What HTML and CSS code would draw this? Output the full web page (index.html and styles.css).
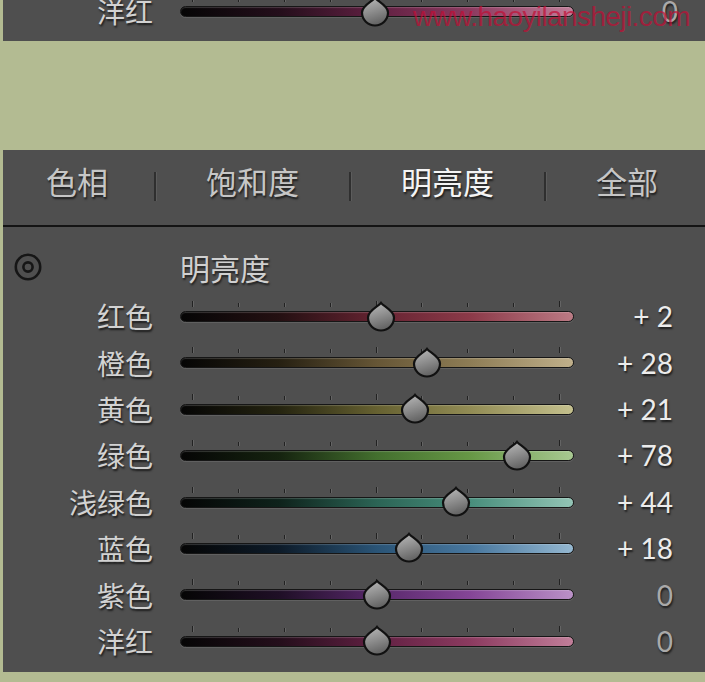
FILE: index.html
```html
<!DOCTYPE html>
<html lang="zh-CN">
<head>
<meta charset="utf-8">
<title>HSL 明亮度</title>
<link rel="stylesheet" href="styles.css">
</head>
<body>
<svg class="defs" width="0" height="0" aria-hidden="true">
  <defs>
    <linearGradient id="thumbFill" x1="0" y1="0" x2="0.3" y2="1">
      <stop offset="0" stop-color="#bdbdbd"/>
      <stop offset="0.55" stop-color="#8e8e8e"/>
      <stop offset="1" stop-color="#666666"/>
    </linearGradient>
  </defs>
</svg>

<div class="panel panel-top">
  <div class="row row-cut">
    <div class="label">洋红</div>
    <div class="slider">
      <div class="ticks"><i class="tall"></i><i></i><i></i><i></i><i class="tall"></i><i></i><i></i><i></i><i class="tall"></i></div>
      <div class="track t-magenta"></div>
      <svg class="thumb" style="left:181px" viewBox="0 0 28 28"><path d="M14 0.8 C16.8 4.5 27 8.5 27 15.5 A13 13 0 0 1 1 15.5 C1 8.5 11.2 4.5 14 0.8 Z"/></svg>
    </div>
    <div class="value zero shift">0</div>
  </div>
  <div class="watermark">www.haoyilansheji.com</div>
</div>

<div class="panel panel-main">
  <div class="tabs">
    <div class="tab tab-1">色相</div>
    <span class="sep"></span>
    <div class="tab tab-mid">饱和度</div>
    <span class="sep"></span>
    <div class="tab tab-mid active">明亮度</div>
    <span class="sep"></span>
    <div class="tab tab-last">全部</div>
  </div>

  <div class="section-head">
    <div class="target">
      <svg viewBox="0 0 28 28" width="28" height="28"><circle cx="14" cy="14" r="12.2"/><circle cx="14" cy="14" r="4.6"/></svg>
    </div>
    <div class="section-title">明亮度</div>
  </div>

  <div class="row">
    <div class="label">红色</div>
    <div class="slider">
      <div class="ticks"><i class="tall"></i><i></i><i></i><i></i><i class="tall"></i><i></i><i></i><i></i><i class="tall"></i></div>
      <div class="track t-red"></div>
      <svg class="thumb" style="left:186.6px" viewBox="0 0 28 28"><path d="M14 0.8 C16.8 4.5 27 8.5 27 15.5 A13 13 0 0 1 1 15.5 C1 8.5 11.2 4.5 14 0.8 Z"/></svg>
    </div>
    <div class="value">+ 2</div>
  </div>

  <div class="row">
    <div class="label">橙色</div>
    <div class="slider">
      <div class="ticks"><i class="tall"></i><i></i><i></i><i></i><i class="tall"></i><i></i><i></i><i></i><i class="tall"></i></div>
      <div class="track t-orange"></div>
      <svg class="thumb" style="left:233.4px" viewBox="0 0 28 28"><path d="M14 0.8 C16.8 4.5 27 8.5 27 15.5 A13 13 0 0 1 1 15.5 C1 8.5 11.2 4.5 14 0.8 Z"/></svg>
    </div>
    <div class="value">+ 28</div>
  </div>

  <div class="row">
    <div class="label">黄色</div>
    <div class="slider">
      <div class="ticks"><i class="tall"></i><i></i><i></i><i></i><i class="tall"></i><i></i><i></i><i></i><i class="tall"></i></div>
      <div class="track t-yellow"></div>
      <svg class="thumb" style="left:220.8px" viewBox="0 0 28 28"><path d="M14 0.8 C16.8 4.5 27 8.5 27 15.5 A13 13 0 0 1 1 15.5 C1 8.5 11.2 4.5 14 0.8 Z"/></svg>
    </div>
    <div class="value">+ 21</div>
  </div>

  <div class="row">
    <div class="label">绿色</div>
    <div class="slider">
      <div class="ticks"><i class="tall"></i><i></i><i></i><i></i><i class="tall"></i><i></i><i></i><i></i><i class="tall"></i></div>
      <div class="track t-green"></div>
      <svg class="thumb" style="left:323.4px" viewBox="0 0 28 28"><path d="M14 0.8 C16.8 4.5 27 8.5 27 15.5 A13 13 0 0 1 1 15.5 C1 8.5 11.2 4.5 14 0.8 Z"/></svg>
    </div>
    <div class="value">+ 78</div>
  </div>

  <div class="row">
    <div class="label">浅绿色</div>
    <div class="slider">
      <div class="ticks"><i class="tall"></i><i></i><i></i><i></i><i class="tall"></i><i></i><i></i><i></i><i class="tall"></i></div>
      <div class="track t-aqua"></div>
      <svg class="thumb" style="left:262.2px" viewBox="0 0 28 28"><path d="M14 0.8 C16.8 4.5 27 8.5 27 15.5 A13 13 0 0 1 1 15.5 C1 8.5 11.2 4.5 14 0.8 Z"/></svg>
    </div>
    <div class="value">+ 44</div>
  </div>

  <div class="row">
    <div class="label">蓝色</div>
    <div class="slider">
      <div class="ticks"><i class="tall"></i><i></i><i></i><i></i><i class="tall"></i><i></i><i></i><i></i><i class="tall"></i></div>
      <div class="track t-blue"></div>
      <svg class="thumb" style="left:215.4px" viewBox="0 0 28 28"><path d="M14 0.8 C16.8 4.5 27 8.5 27 15.5 A13 13 0 0 1 1 15.5 C1 8.5 11.2 4.5 14 0.8 Z"/></svg>
    </div>
    <div class="value">+ 18</div>
  </div>

  <div class="row">
    <div class="label">紫色</div>
    <div class="slider">
      <div class="ticks"><i class="tall"></i><i></i><i></i><i></i><i class="tall"></i><i></i><i></i><i></i><i class="tall"></i></div>
      <div class="track t-purple"></div>
      <svg class="thumb" style="left:183px" viewBox="0 0 28 28"><path d="M14 0.8 C16.8 4.5 27 8.5 27 15.5 A13 13 0 0 1 1 15.5 C1 8.5 11.2 4.5 14 0.8 Z"/></svg>
    </div>
    <div class="value zero">0</div>
  </div>

  <div class="row">
    <div class="label">洋红</div>
    <div class="slider">
      <div class="ticks"><i class="tall"></i><i></i><i></i><i></i><i class="tall"></i><i></i><i></i><i></i><i class="tall"></i></div>
      <div class="track t-magenta"></div>
      <svg class="thumb" style="left:183px" viewBox="0 0 28 28"><path d="M14 0.8 C16.8 4.5 27 8.5 27 15.5 A13 13 0 0 1 1 15.5 C1 8.5 11.2 4.5 14 0.8 Z"/></svg>
    </div>
    <div class="value zero">0</div>
  </div>
</div>
</body>
</html>
```

FILE: styles.css
```css
* { box-sizing: border-box; }

html, body {
  margin: 0;
  padding: 0;
}

body {
  width: 705px;
  height: 682px;
  overflow: hidden;
  background: #b3bb92;
  font-family: "Noto Sans CJK SC", "Noto Sans", sans-serif;
  color: #d2d2d2;
}

.defs {
  position: absolute;
  width: 0;
  height: 0;
}

.panel {
  margin-left: 3px;
  background: #4f4f4f;
}

.panel-top {
  position: relative;
  height: 41px;
  overflow: hidden;
}

.panel-main {
  margin-top: 109px;
  height: 522px;
  overflow: hidden;
}

/* tabs */
.tabs {
  display: flex;
  height: 77px;
  border-bottom: 2px solid #141414;
}

.tab {
  display: flex;
  align-items: center;
  justify-content: center;
  padding-bottom: 15px;
  font-size: 31px;
  color: #c6c6c6;
  text-shadow: 1px 2px 2px rgba(0, 0, 0, 0.65);
}

.tab-1 { width: 148px; }
.tab-mid { width: 193px; }
.tab-last { flex: 1; padding-left: 3px; }

.tab.active {
  color: #f4f4f4;
}

.sep {
  align-self: flex-start;
  width: 2px;
  height: 29px;
  margin-top: 22px;
  background: #2f2f2f;
  box-shadow: 1px 0 0 #5c5c5c;
}

.tab-1 + .sep { margin-left: 3px; }

/* section head */
.section-head {
  display: grid;
  grid-template-columns: 150px 394px;
  column-gap: 27px;
  align-items: center;
  height: 66px;
  padding-top: 14px;
}

.target {
  padding-left: 11px;
  display: flex;
  align-items: center;
}

.target svg circle {
  fill: none;
  stroke: #161616;
  stroke-width: 2.6;
}

.section-title {
  font-size: 30px;
  color: #d0d0d0;
  text-shadow: 1px 2px 2px rgba(0, 0, 0, 0.6);
}

/* rows */
.row {
  display: grid;
  grid-template-columns: 150px 394px 72px;
  column-gap: 27px;
  align-items: center;
  height: 46.4px;
}

.row-cut {
  margin-top: -12px;
}

.label {
  text-align: right;
  font-size: 28px;
  line-height: 1;
  color: #d2d2d2;
  text-shadow: 1px 2px 2px rgba(0, 0, 0, 0.65);
}

.slider {
  position: relative;
  height: 46.4px;
  padding-top: 8px;
}

.ticks {
  display: flex;
  justify-content: space-between;
  align-items: flex-end;
  height: 6px;
  margin: 0 14px 0 12px;
}

.ticks i {
  display: block;
  width: 1px;
  height: 4px;
  background: #222;
  box-shadow: 1px 0 0 rgba(255, 255, 255, 0.12);
}

.ticks i.tall {
  height: 6px;
}

.track {
  height: 11px;
  margin-top: 4px;
  border: 1px solid #161616;
  border-radius: 6px;
  box-shadow: 0 1px 0 rgba(255, 255, 255, 0.1), inset 0 1px 1px rgba(255, 255, 255, 0.18);
}

.t-red     { background: linear-gradient(to right, #050505 0%, #241012 25%, #652331 50%, #8c3a49 74%, #bb7a84 100%); }
.t-orange  { background: linear-gradient(to right, #050505 0%, #262012 25%, #665636 50%, #8e7d56 74%, #c0b08b 100%); }
.t-yellow  { background: linear-gradient(to right, #050505 0%, #252410 25%, #666131 50%, #928c55 74%, #c4c08d 100%); }
.t-green   { background: linear-gradient(to right, #050505 0%, #15230f 25%, #436f2e 50%, #679846 74%, #a8c991 100%); }
.t-aqua    { background: linear-gradient(to right, #050505 0%, #0e221b 25%, #2b6455 50%, #488e7c 74%, #93c4b5 100%); }
.t-blue    { background: linear-gradient(to right, #050505 0%, #0d1b29 25%, #2a5476 50%, #48779e 74%, #94b7d0 100%); }
.t-purple  { background: linear-gradient(to right, #050505 0%, #1f0f26 25%, #58286b 50%, #854697 74%, #ba91c7 100%); }
.t-magenta { background: linear-gradient(to right, #050505 0%, #240e1b 25%, #612042 50%, #8c3b60 74%, #c17e99 100%); }

.thumb {
  position: absolute;
  top: 8.5px;
  width: 28px;
  height: 28px;
  overflow: visible;
}

.thumb path {
  fill: url(#thumbFill);
  stroke: #111;
  stroke-width: 2.2;
}

.value {
  text-align: right;
  font-family: "Lato", "Open Sans", sans-serif;
  font-size: 28px;
  line-height: 1;
  color: #ececec;
  text-shadow: 1px 2px 2px rgba(0, 0, 0, 0.65);
}

.value.zero {
  color: #a9a9a9;
}

.value.shift {
  transform: translateX(5px);
}

.watermark {
  position: absolute;
  left: 410px;
  top: 1px;
  font-family: "Liberation Sans", sans-serif;
  font-size: 28px;
  letter-spacing: -0.6px;
  color: rgba(195, 12, 52, 0.7);
  white-space: nowrap;
}
```
